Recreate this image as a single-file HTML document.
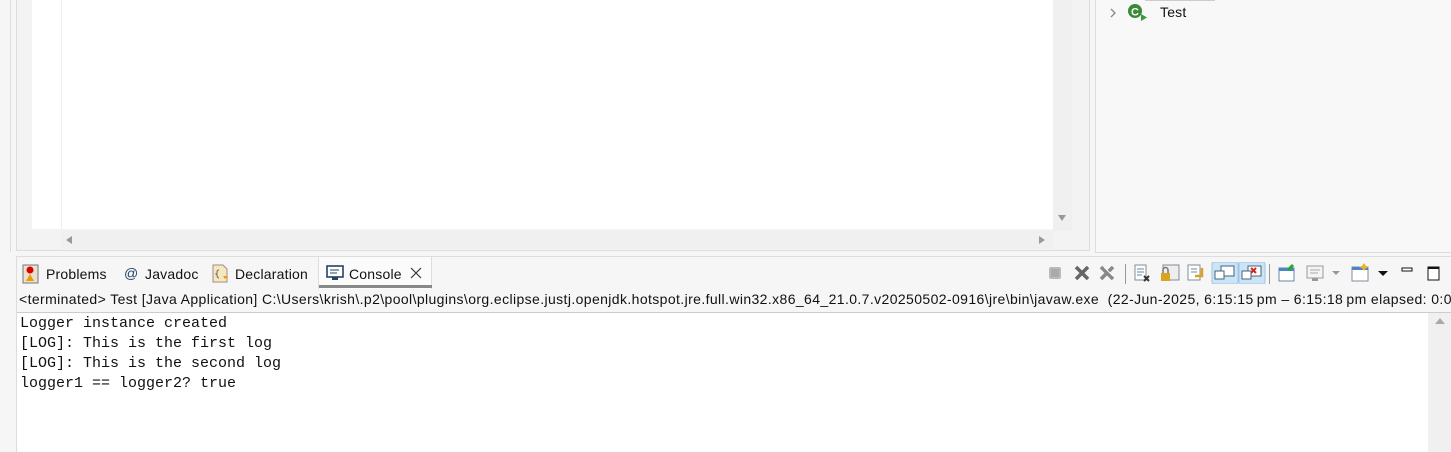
<!DOCTYPE html>
<html><head><style>
*{margin:0;padding:0;box-sizing:border-box}
body{width:1451px;height:452px;overflow:hidden;background:#f6f6f6;position:relative;font-family:"Liberation Sans",sans-serif}
.a{position:absolute}
.t{font-size:14px;color:#111;white-space:nowrap;letter-spacing:0.2px}
</style></head><body>
<div class="a" style="left:10px;top:0;width:1px;height:252px;background:#ddd"></div>
<div class="a" style="left:16px;top:0;width:1074px;height:251px;border-right:1px solid #ddd;border-bottom:1px solid #ddd;border-left:1px solid #ddd;background:#f3f3f3"></div>
<div class="a" style="left:32px;top:0;width:1021px;height:229px;background:#fff"></div>
<div class="a" style="left:61px;top:0;width:1px;height:229px;background:#eee"></div>
<div class="a" style="left:1053px;top:0;width:19px;height:231px;background:#f0f0f0"></div>
<div class="a" style="left:62px;top:231px;width:991px;height:18px;background:#f0f0f0"></div>
<svg class="a" style="left:1057px;top:213px" width="10" height="10"><path d="M1 2h8l-4 6z" fill="#999"/></svg>
<svg class="a" style="left:65px;top:235px" width="10" height="10"><path d="M7 1v8l-6-4z" fill="#999"/></svg>
<svg class="a" style="left:1036px;top:235px" width="10" height="10"><path d="M3 1v8l6-4z" fill="#999"/></svg>
<div class="a" style="left:1095px;top:0;width:356px;height:253px;border-left:1px solid #ddd;border-bottom:1px solid #ddd;background:#f8f8f8"></div>
<div class="a" style="left:1145px;top:0;width:70px;height:1px;background:#ccc"></div>
<svg class="a" style="left:1108px;top:7px" width="10" height="12"><path d="M3 2l4 4-4 4" stroke="#888" stroke-width="1.3" fill="none"/></svg>
<svg class="a" style="left:1126px;top:2px" width="30" height="20"><circle cx="9" cy="9" r="7" fill="#3a8a3a"/><text x="5" y="13.5" font-size="11" font-weight="bold" fill="#fff" font-family="Liberation Sans">C</text><path d="M15 12v7l6-3.5z" fill="#3a9a3a"/></svg>
<div class="a t" style="left:1160px;top:4px">Test</div>
<div class="a" style="left:16px;top:256px;width:1435px;height:196px;border-left:1px solid #ddd;border-top:1px solid #ddd;background:#f6f6f6"></div>
<div class="a" style="left:318px;top:257px;width:114px;height:32px;border-left:1px solid #ddd;border-right:1px solid #ddd;background:#fbfbfb"></div>
<div class="a" style="left:319px;top:285px;width:113px;height:3px;background:#888"></div>
<svg class="a" style="left:22px;top:264px" width="18" height="20"><rect x="1" y="1" width="15" height="18" fill="#e8e0d0" stroke="#777"/><circle cx="8" cy="6" r="3.5" fill="#d00"/><path d="M4 17l4-7 4 7z" fill="#e90"/></svg>
<div class="a t" style="left:46px;top:266px">Problems</div>
<div class="a t" style="left:124px;top:265px;color:#246">@</div>
<div class="a t" style="left:145px;top:266px">Javadoc</div>
<svg class="a" style="left:211px;top:264px" width="20" height="20"><path d="M2 1h10l4 4v13H2z" fill="#f4e8c0" stroke="#a88"/><path d="M8 6c-2 0-2 1-2 3s-1 1-1 1 1 0 1 1 0 3 2 3" stroke="#666" fill="none"/><path d="M12 12h5l-3 3z" fill="#e90"/></svg>
<div class="a t" style="left:235px;top:266px">Declaration</div>
<svg class="a" style="left:326px;top:265px" width="18" height="17"><rect x="1" y="1" width="16" height="11" fill="#fff" stroke="#246" stroke-width="1.6"/><path d="M4 5h9M4 8h7" stroke="#246"/><rect x="6" y="12" width="6" height="3" fill="#246"/></svg>
<div class="a t" style="left:349px;top:266px">Console</div>
<svg class="a" style="left:410px;top:267px" width="12" height="12"><path d="M1 1l10 10M11 1L1 11" stroke="#333" stroke-width="1.2"/></svg>
<svg class="a" style="left:1046px;top:262px" width="405" height="22">
<rect x="3" y="5" width="12" height="12" rx="2" fill="#bbb"/><rect x="5" y="7" width="8" height="8" fill="#aaa"/>
<path d="M30 5l12 12M42 5L30 17" stroke="#666" stroke-width="3.5"/>
<path d="M55 5l12 12M67 5L55 17" stroke="#888" stroke-width="3.5"/><path d="M58 5l9 9" stroke="#fff" stroke-width="1"/>
<rect x="79" y="2" width="1" height="20" fill="#999"/>
<rect x="89" y="3" width="11" height="15" fill="#fff" stroke="#889"/><path d="M91 7h7M91 10h7M91 13h5" stroke="#68a"/><path d="M98 14l5 5M103 14l-5 5" stroke="#333" stroke-width="2"/>
<rect x="117" y="3" width="16" height="15" fill="#eee" stroke="#889"/><rect x="115" y="11" width="9" height="8" fill="#d9a520"/><path d="M117 11v-3a2.5 2.5 0 015 0v3" stroke="#777" fill="none" stroke-width="1.5"/>
<rect x="142" y="3" width="12" height="15" fill="#fff" stroke="#889"/><path d="M145 7h6M145 10h6" stroke="#68a"/><path d="M156 6v8h-7" stroke="#d9a520" stroke-width="2.5" fill="none"/>
<rect x="166" y="0" width="26" height="22" rx="2" fill="#cde4f7" stroke="#9cc4e8"/><rect x="175" y="4" width="13" height="10" fill="#fff" stroke="#467"/><rect x="169" y="9" width="9" height="8" fill="#fff" stroke="#467"/>
<rect x="193" y="0" width="26" height="22" rx="2" fill="#cde4f7" stroke="#9cc4e8"/><rect x="202" y="4" width="13" height="10" fill="#fff" stroke="#467"/><path d="M205 6l5 5M210 6l-5 5" stroke="#d22" stroke-width="2"/><rect x="196" y="9" width="9" height="8" fill="#fff" stroke="#467"/>
<rect x="223" y="2" width="1" height="20" fill="#999"/>
<rect x="233" y="6" width="15" height="13" fill="#fff" stroke="#68a"/><rect x="233" y="6" width="15" height="3" fill="#4a86c5"/><path d="M242 8l5-5" stroke="#2a2" stroke-width="3"/>
<rect x="261" y="4" width="16" height="12" fill="#f4f4f4" stroke="#999"/><path d="M264 8h10M264 11h8" stroke="#aaa"/><rect x="266" y="16" width="6" height="3" fill="#999"/>
<path d="M286 9h8l-4 4z" fill="#999"/>
<rect x="306" y="5" width="16" height="14" fill="#fff" stroke="#889"/><rect x="306" y="5" width="16" height="3" fill="#4a86c5"/><path d="M318 1l2 3 3 1-3 1-2 3-2-3-3-1 3-1z" fill="#e9b520"/>
<path d="M332 9h10l-5 5z" fill="#111"/>
<rect x="356" y="6" width="10" height="3" fill="#fff" stroke="#111"/>
<rect x="382" y="5" width="11" height="13" fill="#fff" stroke="#111"/><rect x="382" y="5" width="11" height="2" fill="#111"/>
</svg>
<div class="a" style="left:17px;top:289px;width:1434px;height:24px;border-bottom:1px solid #ccc"></div>
<div class="a" style="left:19px;top:291px;font-size:14px;color:#111;white-space:nowrap;letter-spacing:0.39px">&lt;terminated&gt; Test [Java Application] C:\Users\krish\.p2\pool\plugins\org.eclipse.justj.openjdk.hotspot.jre.full.win32.x86_64_21.0.7.v20250502-0916\jre\bin\javaw.exe&nbsp; (22-Jun-2025, 6:15:15&#8201;pm – 6:15:18&#8201;pm elapsed: 0:00:00.</div>
<div class="a" style="left:17px;top:313px;width:1411px;height:139px;background:#fff"></div>
<div class="a" style="left:1428px;top:313px;width:23px;height:139px;background:#f0f0f0"></div>
<svg class="a" style="left:1434px;top:316px" width="12" height="10"><path d="M1 8h10l-5-6z" fill="#aaa"/></svg>
<pre class="a" style="left:20px;top:314px;font-family:'Liberation Mono',monospace;font-size:15px;line-height:20px;color:#111">Logger instance created
[LOG]: This is the first log
[LOG]: This is the second log
logger1 == logger2? true</pre>
</body></html>
